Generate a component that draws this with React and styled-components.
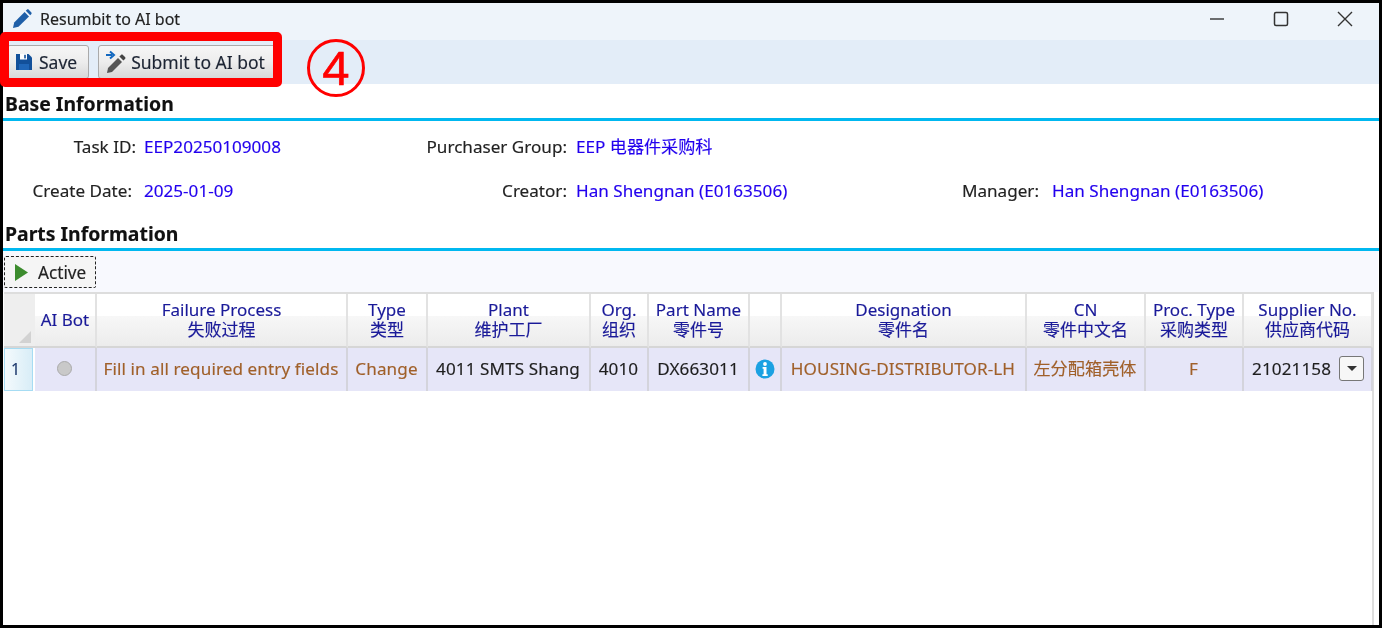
import React from "react";
import styled, { createGlobalStyle } from "styled-components";

const Global = createGlobalStyle`
  html, body { margin: 0; padding: 0; background: #fff; }
  body { font-family: "Noto Sans", "Noto Sans CJK SC", sans-serif; }
`;

const Page = styled.div`
  width: 1383px;
  height: 629px;
  overflow: hidden;
  background: #fff;
`;

const Win = styled.div`
  position: relative;
  box-sizing: border-box;
  width: 1382px;
  height: 628px;
  border: 3px solid #000;
  display: flex;
  flex-direction: column;
  background: #fff;
  filter: blur(0.3px);
  -webkit-text-stroke: 0.15px currentColor;
`;

const TitleBar = styled.div`
  height: 37px;
  flex: none;
  box-sizing: border-box;
  background: #eef4fa;
  display: flex;
  align-items: center;
  padding: 0 0 5px 9px;
  color: #222;
  font-size: 16px;
  gap: 8px;
`;

const TitleText = styled.span`
  flex: 1;
`;

const WinButtons = styled.div`
  display: flex;
  align-items: center;
  padding-right: 2px;
`;

const WinButton = styled.div`
  width: 64px;
  height: 24px;
  display: flex;
  align-items: center;
  justify-content: center;
`;

const Toolbar = styled.div`
  height: 44px;
  flex: none;
  background: #e3edf8;
  display: flex;
  align-items: center;
  padding-left: 4px;
  gap: 9px;
`;

const ToolButton = styled.div`
  box-sizing: border-box;
  height: 34px;
  display: flex;
  align-items: center;
  gap: ${(p) => p.$gap}px;
  padding: 0 11px 0 ${(p) => p.$pl}px;
  border: 1px solid #aaa;
  border-radius: 3px;
  background: linear-gradient(#f6f6f6 0%, #ededed 50%, #d8d8d8 100%);
  color: #1c2433;
  font-size: 17.5px;
  white-space: nowrap;
`;

const Section = styled.div`
  flex: none;
  height: ${(p) => p.$h}px;
  box-sizing: border-box;
  border-bottom: 3px solid #00b8f0;
  display: flex;
  align-items: flex-end;
  padding: 0 0 0 2px;
  font-size: 19.4px;
  font-weight: 700;
  line-height: 28px;
  color: #111;
`;

const Fields = styled.div`
  display: grid;
  grid-template-columns: 133px 292px 139px 395px 77px 1fr;
  grid-auto-rows: 44px;
  padding-top: 4px;
  flex: none;
  font-size: 17.1px;
  line-height: 22px;
  height: 97px;
  box-sizing: border-box;
`;

const Label = styled.div`
  display: flex;
  align-items: center;
  justify-content: flex-end;
  white-space: nowrap;
  color: #222;
  padding-right: ${(p) => p.$pr || 0}px;
`;

const Value = styled.div`
  display: flex;
  align-items: center;
  white-space: nowrap;
  color: #2200ee;
  padding-left: ${(p) => p.$pl || 8}px;
`;

const Content = styled.div`
  flex: 1;
  position: relative;
  display: flex;
  flex-direction: column;
  background: #fff;
  border-right: 2px solid #ddd;
  margin-right: 5px;
  min-height: 0;
`;

const ActionBar = styled.div`
  flex: none;
  height: 41px;
  background: #f8f9fe;
  padding: 5px 0 0 1px;
  box-sizing: border-box;
  margin-right: -6px;
`;

const ActiveButton = styled.div`
  box-sizing: border-box;
  width: 92px;
  height: 32px;
  display: flex;
  align-items: center;
  gap: 10px;
  padding-left: 10px;
  border: 1px dashed #222;
  border-radius: 2px;
  background: #f5f5f5;
  color: #222;
  font-size: 17.2px;
`;

const Table = styled.div`
  display: grid;
  grid-template-columns: 31px 62px 251px 80px 163px 58px 101px 32px 245px 119px 98px 129px;
  grid-template-rows: 54px 43px;
  flex: none;
  margin-left: 1px;
  border-top: 2px solid #ddd;
  box-sizing: border-box;
  height: 99px;
`;

const Head = styled.div`
  box-sizing: border-box;
  display: flex;
  flex-direction: column;
  align-items: center;
  justify-content: center;
  line-height: 20px;
  padding-bottom: 1px;
  text-align: center;
  font-size: 17px;
  color: #1a1a99;
  white-space: nowrap;
  border-right: 2px solid #e2e2e2;
  border-bottom: 2px solid #d6d6d6;
  background: linear-gradient(#fff 0%, #fff 42%, #f7f7f7 43%, #ececec 100%);
`;

const Corner = styled.div`
  position: relative;
  box-sizing: border-box;
  background: #eeeeee;
  border-bottom: 2px solid #d6d6d6;
  &::after {
    content: "";
    position: absolute;
    right: 4px;
    bottom: 3px;
    border-style: solid;
    border-width: 0 0 12px 12px;
    border-color: transparent transparent #d2d2d2 transparent;
  }
`;

const Cell = styled.div`
  box-sizing: border-box;
  display: flex;
  align-items: center;
  justify-content: ${(p) => p.$justify || "center"};
  gap: 8px;
  padding: ${(p) => p.$pad || "0 1px 2px 0"};
  font-size: 17.1px;
  letter-spacing: 0.1px;
  line-height: 22px;
  white-space: nowrap;
  background: #e6e6f8;
  color: ${(p) => (p.$dark ? "#1e1e1e" : "#a0602a")};
  border-right: 2px solid #d4d4dc;
`;

const RowHeader = styled.div`
  box-sizing: border-box;
  display: flex;
  align-items: center;
  padding: 0 0 2px 6px;
  font-size: 16px;
  color: #1f3a6e;
  border: 1px solid #a6dcf3;
  background: linear-gradient(90deg, #f4fafd, #d8edf7);
  margin-right: 2px;
`;

const Radio = styled.span`
  box-sizing: border-box;
  width: 15px;
  height: 15px;
  border-radius: 50%;
  background: #c9c9c9;
  border: 1px solid #aaa;
`;

const Drop = styled.span`
  box-sizing: border-box;
  width: 25px;
  height: 25px;
  border: 1px solid #777;
  border-radius: 3px;
  background: #f7f7f7;
  display: flex;
  align-items: center;
  justify-content: center;
  &::after {
    content: "";
    border-style: solid;
    border-width: 5px 5px 0 5px;
    border-color: #333 transparent transparent transparent;
  }
`;

const RedBox = styled.div`
  position: absolute;
  left: -3px;
  top: 29px;
  width: 282px;
  height: 55px;
  box-sizing: border-box;
  border: 9px solid #ff0000;
  border-radius: 5px;
  pointer-events: none;
`;

const Circled = styled.div`
  position: absolute;
  left: 304px;
  top: 36px;
  width: 58px;
  height: 58px;
  box-sizing: border-box;
  border: 3px solid #ff0000;
  border-radius: 50%;
  color: #ff0000;
  font-size: 49px;
  line-height: 52px;
  text-align: center;
  font-family: "Liberation Sans", sans-serif;
  -webkit-text-stroke: 0.6px #ff0000;
`;

const PencilIcon = () => (
  <svg width="20" height="20" viewBox="0 0 20 20">
    <path d="M1 19l1.2-5.5L12.6 3l4.4 4.4L6.5 17.8z" fill="#1f5fa8" />
    <path d="M13.8 1.8l1-1c.6-.6 1.4-.6 2 0l2.4 2.4c.6.6.6 1.4 0 2l-1 1z" fill="#1f5fa8" />
  </svg>
);

const SaveIcon = () => (
  <svg width="18" height="18" viewBox="0 0 18 18">
    <path d="M1 1h12.5L17 4.5V17H1z" fill="#12509a" />
    <rect x="5" y="1" width="7" height="5.5" fill="#fff" />
    <rect x="9.2" y="1.8" width="1.6" height="3.6" fill="#12509a" />
    <rect x="4" y="11" width="10" height="6" fill="#1f66b8" />
  </svg>
);

const SubmitIcon = () => (
  <svg width="22" height="26" viewBox="0 0 22 26">
    <path d="M2 24l1-5 10-10 4 4L7 23z" fill="#555" />
    <path d="M14.4 7.6l1.6-1.6c.6-.6 1.3-.6 1.9 0l2.1 2.1c.6.6.6 1.3 0 1.9l-1.6 1.6z" fill="#444" />
    <path d="M1 6h6M5 2.5L9 6l-4 3.5" fill="none" stroke="#1268c0" strokeWidth="2" />
  </svg>
);

const PlayIcon = () => (
  <svg width="13" height="17" viewBox="0 0 13 17">
    <path d="M0 0l13 8.5L0 17z" fill="#3c8c2e" />
  </svg>
);

const InfoIcon = () => (
  <svg width="20" height="20" viewBox="0 0 20 20">
    <circle cx="10" cy="10" r="9.5" fill="#1ba1e2" />
    <circle cx="10" cy="5" r="1.9" fill="#fff" />
    <path d="M7.6 8h3.9v7.2h1.2V17H7.4v-1.8h1.2V9.8h-1z" fill="#fff" />
  </svg>
);

const MinIcon = () => (
  <svg width="16" height="16" viewBox="0 0 16 16">
    <path d="M1 8h14" stroke="#333" strokeWidth="1.4" />
  </svg>
);
const MaxIcon = () => (
  <svg width="16" height="16" viewBox="0 0 16 16">
    <rect x="1.5" y="1.5" width="13" height="13" rx="1.5" fill="none" stroke="#333" strokeWidth="1.5" />
  </svg>
);
const CloseIcon = () => (
  <svg width="16" height="16" viewBox="0 0 16 16">
    <path d="M1 1l14 14M15 1L1 15" stroke="#333" strokeWidth="1.4" />
  </svg>
);

const heads = [
  ["AI Bot"],
  ["Failure Process", "失败过程"],
  ["Type", "类型"],
  ["Plant", "维护工厂"],
  ["Org.", "组织"],
  ["Part Name", "零件号"],
  [""],
  ["Designation", "零件名"],
  ["CN", "零件中文名"],
  ["Proc. Type", "采购类型"],
  ["Supplier No.", "供应商代码"],
];

export default function App() {
  return (
    <Page>
      <Global />
      <Win>
        <TitleBar>
          <PencilIcon />
          <TitleText>Resumbit to AI bot</TitleText>
          <WinButtons>
            <WinButton><MinIcon /></WinButton>
            <WinButton><MaxIcon /></WinButton>
            <WinButton><CloseIcon /></WinButton>
          </WinButtons>
        </TitleBar>
        <Toolbar>
          <ToolButton $pl={7} $gap={6}><SaveIcon />Save</ToolButton>
          <ToolButton $pl={6} $gap={4}><SubmitIcon />Submit to AI bot</ToolButton>
        </Toolbar>
        <Section $h={37}>Base Information</Section>
        <Fields>
          <Label>Task ID:</Label>
          <Value>EEP20250109008</Value>
          <Label>Purchaser Group:</Label>
          <Value $pl={9}>EEP 电器件采购科</Value>
          <span />
          <span />
          <Label $pr={4}>Create Date:</Label>
          <Value>2025-01-09</Value>
          <Label>Creator:</Label>
          <Value $pl={9}>Han Shengnan (E0163506)</Value>
          <Label>Manager:</Label>
          <Value $pl={13}>Han Shengnan (E0163506)</Value>
        </Fields>
        <Section $h={33}>Parts Information</Section>
        <Content>
          <ActionBar>
            <ActiveButton><PlayIcon />Active</ActiveButton>
          </ActionBar>
          <Table>
            <Corner />
            {heads.map((h, i) => (
              <Head key={i}>
                {h.map((t, j) => <span key={j}>{t}</span>)}
              </Head>
            ))}
            <RowHeader>1</RowHeader>
            <Cell><Radio /></Cell>
            <Cell>Fill in all required entry fields</Cell>
            <Cell>Change</Cell>
            <Cell $dark>4011 SMTS Shang</Cell>
            <Cell $dark>4010</Cell>
            <Cell $dark>DX663011</Cell>
            <Cell><InfoIcon /></Cell>
            <Cell>HOUSING-DISTRIBUTOR-LH</Cell>
            <Cell>左分配箱壳体</Cell>
            <Cell>F</Cell>
            <Cell $dark $justify="flex-start" $pad="0 0 2px 8px">21021158<Drop /></Cell>
          </Table>
        </Content>
        <RedBox />
        <Circled>4</Circled>
      </Win>
    </Page>
  );
}
